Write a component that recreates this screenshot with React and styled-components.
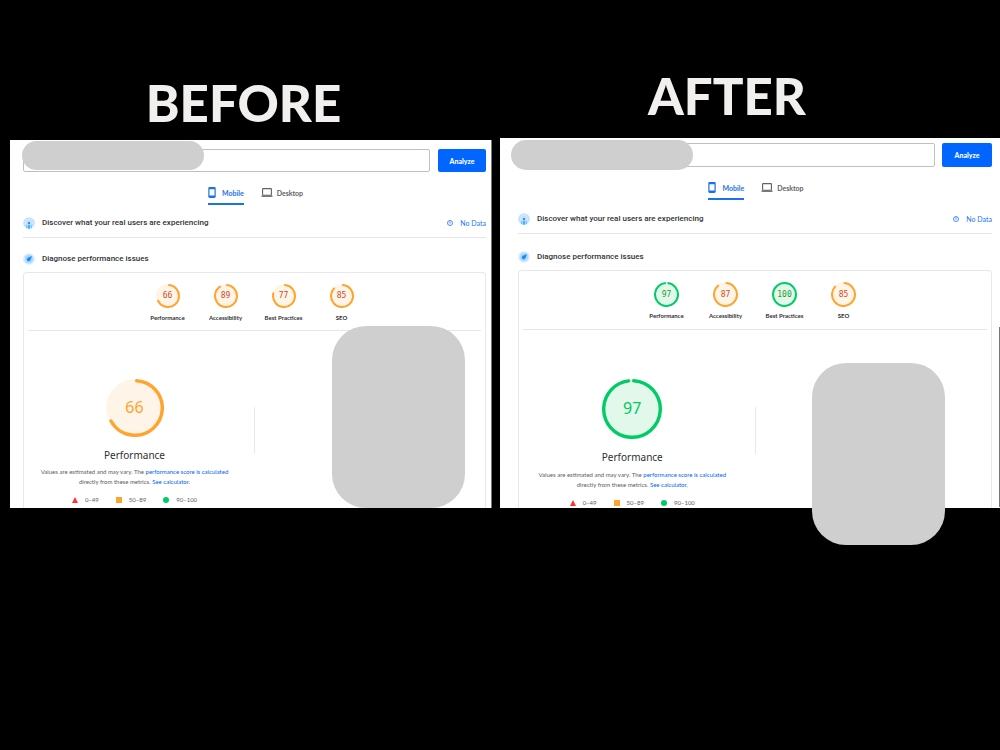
import React from "react";

import styled, { createGlobalStyle, ThemeProvider } from "styled-components";

const GlobalStyle = createGlobalStyle`
  * {
    box-sizing: border-box;
  }
  body {
    margin: 0;
    background: #000;
    font-family: Lato, sans-serif;
    color: #2c2f33;
  }
  h2, h3, p, ul {
    margin: 0;
    padding: 0;
  }
`;

const ORANGE = { line: "#ffa42c", fill: "#fff4e8", text: "#cf4a24", big: "#ffa42c" };
const GREEN = { line: "#00cc66", fill: "#e2f8eb", text: "#2a9a2a", big: "#00c860" };

const toneOf = (score) => (score >= 90 ? GREEN : ORANGE);

const reports = [
  {
    id: "before",
    title: "BEFORE",
    scores: [
      { label: "Performance", value: 66 },
      { label: "Accessibility", value: 89 },
      { label: "Best Practices", value: 77 },
      { label: "SEO", value: 85 },
    ],
    theme: {
      titleTop: 75,
      titleHeight: 65,
      titleShift: 15,
      padding: "9px 5px 0 13px",
      formHeight: 23,
      buttonWidth: 48,
      formGap: 8,
      tabsTop: 14,
      rowTop: 4,
      headTop: 8,
      headHeight: 34,
      ring: 24,
      labelGap: 6,
      gaugeWidth: 58,
      gaugesHeight: 58,
      bigRing: 58,
      bigTop: 48,
      noteTop: 4,
      bottom: 3,
      pill: { left: 12, top: 1, height: 29 },
      block: { right: 26, top: 186 },
    },
  },
  {
    id: "after",
    title: "AFTER",
    scores: [
      { label: "Performance", value: 97 },
      { label: "Accessibility", value: 87 },
      { label: "Best Practices", value: 100 },
      { label: "SEO", value: 85 },
    ],
    theme: {
      titleTop: 68,
      titleHeight: 70,
      titleShift: 46,
      padding: "5px 7px 0 18px",
      formHeight: 24,
      buttonWidth: 50,
      formGap: 7,
      tabsTop: 14,
      rowTop: 5,
      headTop: 9,
      headHeight: 36,
      ring: 25,
      labelGap: 5,
      gaugeWidth: 59,
      gaugesHeight: 59,
      bigRing: 60,
      bigTop: 49,
      noteTop: 5,
      bottom: 0,
      pill: { left: 11, top: 2, height: 30 },
      block: { right: 54, top: 225 },
    },
  },
];

const PhoneIcon = () => (
  <svg width="8" height="11" viewBox="0 0 8 11" fill="none">
    <rect x="0.9" y="0.6" width="6.2" height="9.8" rx="0.8" stroke="#1a73e8" strokeWidth="1.2" />
    <path d="M0.9 1.4h6.2M0.9 9.4h6.2" stroke="#1a73e8" strokeWidth="1.7" />
  </svg>
);

const LaptopIcon = () => (
  <svg width="12" height="9" viewBox="0 0 12 9" fill="none">
    <rect x="1.6" y="0.6" width="8.8" height="6.6" rx="0.5" stroke="#5f6368" strokeWidth="1.1" />
    <path d="M0.5 8.2h11" stroke="#5f6368" strokeWidth="1.3" />
  </svg>
);

const UsersIcon = () => (
  <svg width="12" height="12" viewBox="0 0 12 12">
    <circle cx="6" cy="6" r="5.8" fill="#c4e0ff" />
    <path d="M2.6 7a3.6 3.6 0 1 1 6.8 0" fill="none" stroke="#e3f1ff" strokeWidth="0.7" />
    <circle cx="6" cy="5.9" r="1" fill="#1a66f0" />
    <path d="M5.1 7.8h1.8v4H5.1z" fill="#38b0ff" />
    <path d="M3 8.2h1.4v3H3zM7.6 8.2H9v3H7.6z" fill="#6ccaff" />
  </svg>
);

const GaugeIcon = () => (
  <svg width="12" height="12" viewBox="0 0 12 12">
    <circle cx="6" cy="6" r="5.8" fill="#d5e9ff" />
    <circle cx="6" cy="6" r="4" fill="#a9d6ff" />
    <path d="M9 3 7.4 7A1.8 1.8 0 1 1 5 4.7z" fill="#1289ff" />
  </svg>
);

const InfoIcon = () => (
  <svg width="6" height="6" viewBox="0 0 6 6" fill="none">
    <circle cx="3" cy="3" r="2.5" stroke="#1a73ff" strokeWidth="0.8" />
    <path d="M3 1.4v2.2" stroke="#1a73ff" strokeWidth="0.8" />
  </svg>
);

const Ring = ({ value, size, stroke, big }) => {
  const tone = toneOf(value);
  const r = (size - stroke) / 2;
  const length = 2 * Math.PI * r;
  // turn the arc so that its round cap starts at twelve o'clock
  const start = -90 + (stroke / 2 / r) * (180 / Math.PI);
  return (
    <RingBox>
      <svg width={size} height={size} viewBox={`0 0 ${size} ${size}`}>
        <circle cx={size / 2} cy={size / 2} r={size / 2} fill={tone.fill} />
        <circle
          cx={size / 2}
          cy={size / 2}
          r={r}
          fill="none"
          stroke={tone.line}
          strokeWidth={stroke}
          strokeLinecap={value > 95 && !big ? "butt" : "round"}
          strokeDasharray={`${(length * value) / 100} ${length}`}
          transform={`rotate(${start} ${size / 2} ${size / 2})`}
        />
      </svg>
      <RingValue $big={big} $color={big ? tone.big : tone.text}>
        {value}
      </RingValue>
    </RingBox>
  );
};

const Report = ({ report }) => {
  const { id, title, scores, theme } = report;
  return (
    <ThemeProvider theme={theme}>
      <Column>
        <Title>{title}</Title>
        <Panel $edge={id === "before" ? "#777" : "#fff"}>
          <UrlForm onSubmit={(e) => e.preventDefault()}>
            <UrlInput type="url" aria-label={`${title} page URL`} />
            <AnalyzeButton type="submit">Analyze</AnalyzeButton>
          </UrlForm>
          <Tabs>
            <Tab type="button" $active>
              <PhoneIcon />
              Mobile
            </Tab>
            <Tab type="button">
              <LaptopIcon />
              Desktop
            </Tab>
          </Tabs>
          <FieldData>
            <UsersIcon />
            <SectionTitle>Discover what your real users are experiencing</SectionTitle>
            <NoData href="#">
              <InfoIcon />
              No Data
            </NoData>
          </FieldData>
          <LabData>
            <GaugeIcon />
            <SectionTitle>Diagnose performance issues</SectionTitle>
          </LabData>
          <Card>
            <Gauges>
              {scores.map((score) => (
                <Gauge key={score.label}>
                  <Ring value={score.value} size={theme.ring} stroke={2} />
                  <GaugeLabel>{score.label}</GaugeLabel>
                </Gauge>
              ))}
            </Gauges>
            <Details>
              <Summary>
                <Ring value={scores[0].value} size={theme.bigRing} stroke={3.4} big />
                <Name>Performance</Name>
                <Note>
                  Values are estimated and may vary. The <a href="#">performance score is calculated</a>
                  <br />
                  directly from these metrics. <a href="#">See calculator.</a>
                </Note>
                <Legend>
                  <li>
                    <svg width="6" height="6" viewBox="0 0 6 6">
                      <path d="M3 0l3 6H0z" fill="#ff3333" />
                    </svg>
                    0–49
                  </li>
                  <li>
                    <svg width="6" height="6" viewBox="0 0 6 6">
                      <rect width="6" height="6" fill="#ffa42c" />
                    </svg>
                    50–89
                  </li>
                  <li>
                    <svg width="6" height="6" viewBox="0 0 6 6">
                      <circle cx="3" cy="3" r="3" fill="#00cc66" />
                    </svg>
                    90–100
                  </li>
                </Legend>
              </Summary>
              <Separator />
            </Details>
          </Card>
          <PillMask />
          <BlockMask />
          {id === "after" && <ScrollThumb />}
        </Panel>
      </Column>
    </ThemeProvider>
  );
};

const App = () => {
  return (
    <>
      <GlobalStyle />
      <Stage>
        {reports.map((report) => (
          <Report key={report.id} report={report} />
        ))}
      </Stage>
    </>
  );
};

const Stage = styled.main`
  display: grid;
  grid-template-columns: 482fr 500fr;
  column-gap: 8px;
  align-items: start;
  min-height: 100vh;
  padding-left: 10px;
  background: #000;
`;

const Column = styled.section`
  min-width: 0;
  padding-top: ${({ theme }) => theme.titleTop}px;
`;

const Title = styled.h2`
  height: ${({ theme }) => theme.titleHeight}px;
  padding-right: ${({ theme }) => theme.titleShift}px;
  font-size: 51px;
  line-height: 56px;
  font-weight: 900;
  text-align: center;
  color: #f1f0ee;
`;

const Panel = styled.div`
  position: relative;
  padding: ${({ theme }) => theme.padding};
  background: #fff;
  border-right: 1px solid ${({ $edge }) => $edge};
`;

const UrlForm = styled.form`
  display: flex;
  gap: ${({ theme }) => theme.formGap}px;
  height: ${({ theme }) => theme.formHeight}px;
`;

const UrlInput = styled.input`
  flex: 1;
  min-width: 0;
  padding: 0 8px;
  border: 1px solid #bcc0c4;
  border-radius: 2px;
  font-size: 8px;
  outline: none;
`;

const AnalyzeButton = styled.button`
  width: ${({ theme }) => theme.buttonWidth}px;
  padding: 0;
  border: 0;
  border-radius: 2px;
  background: #0066ff;
  color: #fff;
  font-family: inherit;
  font-size: 7px;
  font-weight: 900;
`;

const Tabs = styled.div`
  display: flex;
  justify-content: center;
  gap: 17px;
  padding: ${({ theme }) => theme.tabsTop}px 0 0 2px;
`;

const Tab = styled.button`
  display: flex;
  align-items: center;
  gap: ${({ $active }) => ($active ? 6 : 4)}px;
  height: 19px;
  padding: 0 0 4px;
  border: 0;
  border-bottom: 2px solid ${({ $active }) => ($active ? "#1a73e8" : "transparent")};
  background: none;
  color: ${({ $active }) => ($active ? "#1a73e8" : "#5f6368")};
  font-family: inherit;
  font-size: 7px;
  font-weight: 700;
`;

const FieldData = styled.div`
  display: flex;
  align-items: center;
  gap: 7px;
  height: 29px;
  margin-top: ${({ theme }) => theme.rowTop}px;
  border-bottom: 1px solid #e4e6e8;
`;

const LabData = styled.div`
  display: flex;
  align-items: center;
  gap: 7px;
  height: ${({ theme }) => theme.headHeight}px;
  padding-top: ${({ theme }) => theme.headTop}px;
`;

const SectionTitle = styled.h3`
  flex: 1;
  font-family: Roboto, sans-serif;
  font-size: 8px;
  line-height: 10px;
  font-weight: 500;
  color: #303337;
`;

const NoData = styled.a`
  display: flex;
  align-items: center;
  gap: 7px;
  color: #1a73ff;
  font-size: 7px;
  text-decoration: none;
`;

const Card = styled.div`
  padding: 0 4px ${({ theme }) => theme.bottom}px;
  border: 1px solid #e6e8ea;
  border-bottom: 0;
  border-radius: 4px 4px 0 0;
`;

const Gauges = styled.div`
  display: flex;
  justify-content: center;
  height: ${({ theme }) => theme.gaugesHeight}px;
  padding-top: 11px;
  border-bottom: 1px solid #e4e6e8;
`;

const Gauge = styled.div`
  display: flex;
  flex-direction: column;
  align-items: center;
  gap: ${({ theme }) => theme.labelGap}px;
  width: ${({ theme }) => theme.gaugeWidth}px;
`;

const GaugeLabel = styled.span`
  font-size: 6px;
  line-height: 8px;
  font-weight: 700;
  white-space: nowrap;
`;

const RingBox = styled.div`
  display: grid;
  place-items: center;

  > * {
    grid-area: 1 / 1;
  }
`;

const RingValue = styled.span`
  padding-bottom: ${({ $big }) => ($big ? 2 : 0)}px;
  color: ${({ $color }) => $color};
  font-family: ${({ $big }) => ($big ? '"Noto Sans", sans-serif' : '"DejaVu Sans Mono", monospace')};
  font-size: ${({ $big }) => ($big ? 16 : 8)}px;
  line-height: ${({ $big }) => ($big ? 20 : 10)}px;
`;

const Details = styled.div`
  display: grid;
  grid-template-columns: 1fr 1px 1fr;
  padding-top: ${({ theme }) => theme.bigTop}px;
`;

const Summary = styled.div`
  display: flex;
  flex-direction: column;
  align-items: center;
  padding-right: 13px;
`;

const Name = styled.div`
  margin-top: 10px;
  font-family: "Noto Sans", sans-serif;
  font-size: 10px;
  line-height: 16px;
`;

const Note = styled.p`
  margin-top: ${({ theme }) => theme.noteTop}px;
  font-size: 6px;
  line-height: 10px;
  color: #5a5d60;
  text-align: center;
  white-space: nowrap;

  a {
    color: #0062f5;
    text-decoration: none;
  }
`;

const Legend = styled.ul`
  display: flex;
  gap: 17px;
  margin-top: 8px;
  list-style: none;
  font-size: 6px;
  line-height: 10px;
  color: #5a5d60;

  li {
    display: flex;
    align-items: center;
    gap: 7px;
  }
`;

const Separator = styled.div`
  height: 47px;
  margin-top: 28px;
  background: #e6e8ea;
`;

const Mask = styled.div`
  position: absolute;
  background: #cfcfcf;
`;

const PillMask = styled(Mask)`
  left: ${({ theme }) => theme.pill.left}px;
  top: ${({ theme }) => theme.pill.top}px;
  width: 182px;
  height: ${({ theme }) => theme.pill.height}px;
  border-radius: 15px;
`;

const BlockMask = styled(Mask)`
  right: ${({ theme }) => theme.block.right}px;
  top: ${({ theme }) => theme.block.top}px;
  width: 133px;
  height: 182px;
  border-radius: 34px;
`;

const ScrollThumb = styled.div`
  position: absolute;
  right: -1px;
  bottom: 1px;
  width: 1px;
  height: 180px;
  background: #777;
`;

export default App;
